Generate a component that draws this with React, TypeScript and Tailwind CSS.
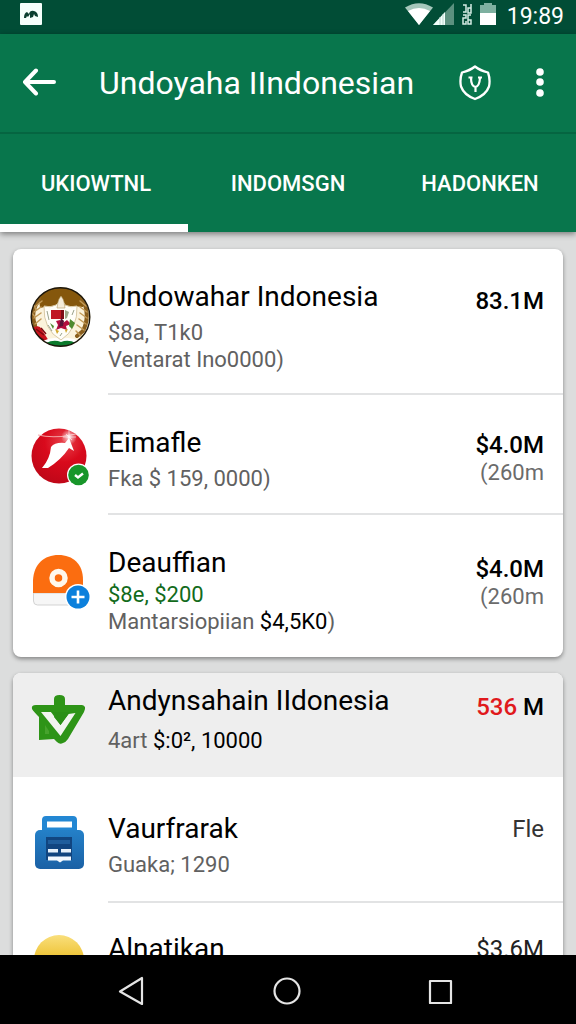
import type { ReactNode } from 'react';
import { clsx } from 'clsx';

interface Entry {
  id: string;
  icon: ReactNode;
  iconClass: string;
  title: string;
  details: ReactNode;
  detailsClass?: string;
  amount: ReactNode;
  amountClass: string;
  note?: string;
  rowClass: string;
}

const tabs = ['UKIOWTNL', 'INDOMSGN', 'HADONKEN'];

/* ===== Entry icons ===== */

function EmblemIcon() {
  return (
    <svg viewBox="0 0 62 62" className="size-[62px]" aria-hidden="true">
      <defs>
        <clipPath id="emblem">
          <circle cx="30.5" cy="31" r="29.5" />
        </clipPath>
      </defs>
      <circle cx="30.5" cy="31" r="30" fill="#fbf3dc" />
      <g clipPath="url(#emblem)">
        <path d="M8 0h45v21l-11-1-6 2H25l-6-2-9 2z" fill="#85570c" />
        <path d="M0 38l10 3 9 14-4 7H0z" fill="#c8141c" />
        <path d="M10 57l10-4h21l10 4-8 7H18z" fill="#0b7a2c" />
        <path d="M13 55q9-5 18-2 9-3 18 2l-3 2q-8-4-15-1-7-3-15 1z" fill="#fff" />
        <g stroke="#8a5f1e" strokeWidth="4" fill="none" strokeLinecap="round">
          <path d="M9 13Q0 26 5 39" />
          <path d="M52 13q9 15 1 32l-6 5" />
        </g>
        <g stroke="#c29a58" strokeWidth="1.5" strokeLinecap="round">
          <path d="M6 20l6-5M4 26l7-5M4 32l7-5M5 38l6-5M4 19l2 5M2 27l3 4" />
          <path d="M56 20l-6-5M57 26l-7-5M57 32l-7-5M56 38l-7-5M54 44l-7-5M51 50l-5-5" />
        </g>
        <path d="M6 43l8 6M5 48l9 6M11 42l5 6" stroke="#7d0a10" strokeWidth="1.5" />
      </g>
      <path d="M14 20q6 2 12-1l2-2h6l1 2q6 3 12 1 1 23-16 34Q13 44 14 20z" fill="#fffef8" stroke="#d9c9a5" strokeWidth="1" />
      <path d="M27 22l1-6 1-3 2-3 2 3 1 3 1 6z" fill="#f4ecda" stroke="#b29862" strokeWidth="0.6" />
      <path d="M21 24h10v9H21z" fill="#c01822" />
      <path d="M31 24h3v9h-3z" fill="#7e0c16" />
      <path d="M35 24l4 2-2 6-2 1z" fill="#9fa88b" />
      <path d="M26 35l4-1 3 3 4-3 4 4-5 2 1 4-6-2-5 2 2-5z" fill="#b30d3e" />
      <path d="M31 32l3 3-1 5-4 1z" fill="#5a1238" />
      <path d="M20 37l4 3-1 3zM40 33l5 4-3 6-3-3z" fill="#4f8b2f" />
      <path d="M25 43l4 2-2 3zM35 44l3-1-2 4z" fill="#d2a82e" />
      <path d="M17 25l2 9M18 39l4 6M44 24l-2 5M32 47l-2 3" stroke="#99a18a" strokeWidth="1" />
      <circle cx="30.5" cy="31" r="29.3" fill="none" stroke="#1c170d" strokeWidth="1.4" />
    </svg>
  );
}

function RedArrowIcon() {
  return (
    <svg viewBox="0 0 62 62" className="size-[62px]" aria-hidden="true">
      <defs>
        <radialGradient id="redBall" cx="0.6" cy="0.25" r="0.8">
          <stop offset="0" stopColor="#e8434c" />
          <stop offset="0.45" stopColor="#d90a1c" />
          <stop offset="1" stopColor="#bd0718" />
        </radialGradient>
        <radialGradient id="flare">
          <stop offset="0" stopColor="#fff" />
          <stop offset="0.35" stopColor="#fff" stopOpacity="0.55" />
          <stop offset="1" stopColor="#fff" stopOpacity="0" />
        </radialGradient>
      </defs>
      <circle cx="29" cy="29" r="27.5" fill="url(#redBall)" />
      <path d="M8 8q16 4 38-1" fill="none" stroke="#f4a3a5" strokeWidth="1.1" />
      <circle cx="39" cy="10" r="8" fill="url(#flare)" />
      <path d="M39 3v14M33 10h13M36 7l6 6" stroke="#fff" strokeOpacity="0.7" strokeWidth="0.8" />
      <path d="M12 41q8-9 9-21 4-5 14-4l4-5 5 13-5-3Q31 33 18 41z" fill="#fff" />
      <circle cx="48.500" cy="48" r="11.500" fill="#fff" />
      <circle cx="48.500" cy="48" r="10.300" fill="#18962a" />
      <path d="M45 48l3 2.500 5-4" fill="none" stroke="#fff" strokeWidth="2.400" />
    </svg>
  );
}

function OrangeIcon() {
  return (
    <svg viewBox="0 0 62 62" className="size-[62px]" aria-hidden="true">
      <path d="M3.500 43h49v8q0 4-4 4h-41q-4 0-4-4z" fill="#f6f6f6" stroke="#d3d3d3" />
      <path d="M3 43V30C4 14 14 5 28.500 5S53 14 53 30v13z" fill="#fb6d10" />
      <circle cx="28.500" cy="28" r="6.500" fill="none" stroke="#fff8ec" strokeWidth="5.500" />
      <circle cx="48" cy="47" r="13" fill="#fff" />
      <circle cx="48" cy="47" r="11.500" fill="#0c80dc" />
      <path d="M41.500 47h13M48 40.500v13" stroke="#fff" strokeWidth="2.600" />
    </svg>
  );
}

function GreenCheckIcon() {
  return (
    <svg viewBox="0 0 62 62" className="size-[62px]" aria-hidden="true">
      <path
        d="M24 16v-6q0-4 5.500-4t5.500 4v6h17q5 1 2 7L38 50q-2 3-5 4-3 2-6-1l-3-3-15 1V28Q4 23 2 20q-1-4 4-4z"
        fill="#2e9417"
      />
      <path d="M11 23h10l9.500 13 8-11 7-1L30.500 47z" fill="#f2f4ef" />
      <path d="M21 23l4 2-1 3 6.500 8L40 23z" fill="#2b8f16" />
      <path d="M15 36l4 6v3h-4z" fill="#47a32d" />
    </svg>
  );
}

function BlueCaseIcon() {
  return (
    <svg viewBox="0 0 62 62" className="size-[62px]" aria-hidden="true">
      <defs>
        <linearGradient id="case" x1="0" y1="0" x2="0" y2="1">
          <stop offset="0" stopColor="#2480c8" />
          <stop offset="1" stopColor="#1b61a5" />
        </linearGradient>
      </defs>
      <path d="M12 20V8q0-4 4-4h27q4 0 4 4v12h-5V9.500H17V20z" fill="#2387d3" />
      <path d="M17 15.500h25V20H17z" fill="#2387d3" />
      <rect x="5" y="18" width="49" height="39" rx="5" fill="url(#case)" />
      <path d="M16 25h26v23H16z" fill="#114580" />
      <path d="M18 28h22v4H18z" fill="#1f5d9c" />
      <path d="M18 37h10v3.500H18zM31 37h10v3.500H31z" fill="#e6f1fb" />
      <path d="M18 44.500h23v4h-8l-3 2-3-2h-9z" fill="#f3f9ff" />
    </svg>
  );
}

function CoinIcon() {
  return (
    <svg viewBox="0 0 62 62" className="size-[62px]" aria-hidden="true">
      <defs>
        <linearGradient id="coin" x1="0" y1="0" x2="0" y2="1">
          <stop offset="0" stopColor="#f9df7c" />
          <stop offset="0.5" stopColor="#edc02e" />
        </linearGradient>
      </defs>
      <circle cx="29" cy="30" r="25" fill="url(#coin)" />
    </svg>
  );
}

const firstCard: Entry[] = [
  {
    id: 'undowahar',
    icon: <EmblemIcon />,
    iconClass: 'mt-[37px]',
    title: 'Undowahar Indonesia',
    details: (
      <>
        <p>$8a, T1k0</p>
        <p>Ventarat Ino0000)</p>
      </>
    ),
    detailsClass: 'mt-1.5',
    amount: '83.1M',
    amountClass: 'mt-1.5 font-medium',
    rowClass: 'min-h-[146px]',
  },
  {
    id: 'eimafle',
    icon: <RedArrowIcon />,
    iconClass: 'mt-8',
    title: 'Eimafle',
    details: <p>Fka $ 159, 0000)</p>,
    detailsClass: 'mt-1.5',
    amount: '$4.0M',
    amountClass: 'mt-1 font-medium',
    note: '(260m',
    rowClass: 'min-h-[120px]',
  },
  {
    id: 'deauffian',
    icon: <OrangeIcon />,
    iconClass: 'mt-[35px]',
    title: 'Deauffian',
    details: (
      <>
        <p className="text-[#126b1b]">$8e, $200</p>
        <p>
          Mantarsiopiian <span className="text-black">$4,5K0</span>)
        </p>
      </>
    ),
    detailsClass: 'mt-0.5',
    amount: '$4.0M',
    amountClass: 'mt-2 font-medium',
    note: '(260m',
    rowClass: 'min-h-[142px]',
  },
];

const secondCard: Entry[] = [
  {
    id: 'andynsahain',
    icon: <GreenCheckIcon />,
    iconClass: 'mt-4',
    title: 'Andynsahain IIdonesia',
    details: (
      <p>
        4art <span className="text-black">$:0², 10000</span>
      </p>
    ),
    detailsClass: 'mt-2.5',
    amount: (
      <>
        <span className="text-[#e0191c]">536</span> M
      </>
    ),
    amountClass: 'mt-2 font-medium',
    rowClass: 'min-h-[104px] bg-[#eeeeee]',
  },
  {
    id: 'vaurfrarak',
    icon: <BlueCaseIcon />,
    iconClass: 'mt-[35px]',
    title: 'Vaurfrarak',
    details: <p>Guaka; 1290</p>,
    detailsClass: 'mt-1.5',
    amount: 'Fle',
    amountClass: 'mt-0.5 text-[#333333]',
    rowClass: 'min-h-[126px]',
  },
  {
    id: 'alnatikan',
    icon: <CoinIcon />,
    iconClass: 'mt-[27px]',
    title: 'Alnatikan',
    details: null,
    amount: '$3.6M',
    amountClass: 'mt-0.5 text-[#222222]',
    rowClass: 'min-h-[120px]',
  },
];

function EntryRow({ entry, padding, divider }: { entry: Entry; padding: string; divider: boolean }) {
  return (
    <li className={clsx('flex pl-[17px]', entry.rowClass)}>
      <div className={clsx('w-[78px] shrink-0', entry.iconClass)}>{entry.icon}</div>
      <div
        className={clsx(
          'flex min-w-0 flex-1 items-start justify-between pr-[19px]',
          padding,
          divider && 'border-b-2 border-[#e2e3e4]'
        )}
      >
        <div className="whitespace-nowrap">
          <h2 className="text-[28px] leading-8 text-black">{entry.title}</h2>
          <div className={clsx('text-[22px] leading-[27px] text-[#616161]', entry.detailsClass)}>
            {entry.details}
          </div>
        </div>
        <div className={clsx('shrink-0 text-right text-2xl leading-7', entry.amountClass)}>
          <p>{entry.amount}</p>
          {entry.note && <p className="text-[22px] leading-[27px] font-normal text-[#6b6b6b]">{entry.note}</p>}
        </div>
      </div>
    </li>
  );
}

const cardClass = 'overflow-hidden rounded-lg bg-white shadow-[0_2px_4px_rgba(0,0,0,0.4)]';

export default function App() {
  return (
    <div className="flex h-screen flex-col overflow-hidden bg-[#dcdddd] font-[Roboto,sans-serif] text-black">
      {/* ===== Status bar ===== */}
      <div className="flex h-[34px] shrink-0 items-center bg-[#014d36] pr-3 pl-5 text-white">
        <svg viewBox="0 0 22 22" className="mb-1.5 size-[22px]" aria-hidden="true">
          <rect width="22" height="22" rx="1" fill="#f5fffb" />
          <path d="M4 15q0-5 3-6l2 2q1-4 5-3 4 1 4 6l-3-1-1-2-1 3-3 1v-4l-2 3-1-1-1 2z" fill="#0a3f2f" />
        </svg>
        <div className="ml-auto flex items-center">
          <svg viewBox="0 0 92 22" className="mb-1.5 h-[22px] w-[92px]" aria-hidden="true">
            <path d="M0 4.500Q14-4 28 4.500L14 22z" fill="#a5c7bb" />
            <path d="M3 8q11-6 22 0L14 22z" fill="#fff" />
            <path d="M49 0v22H28z" fill="#5c917f" />
            <path d="M40 9v13H28z" fill="#f2fffb" />
            <path d="M35 14v8M38 11v11" stroke="#b8d6cc" />
            <g fill="none" stroke="#d5ece4" strokeWidth="1.500">
              <path d="M58 2h3v7h-3M66 1v4h-3v5h3V5M58 12h3v3h-3v6h3v-3M66 12h-3v9h3v-4h-3" />
            </g>
            <path d="M75 2h4V0h8v2h4v9H75z" fill="#7eb0a0" />
            <path d="M75 10h16v12H75z" fill="#fff" />
          </svg>
          <span className="ml-[10px] text-[23px] leading-7">19:89</span>
        </div>
      </div>

      {/* ===== App bar ===== */}
      <header className="z-10 shrink-0 bg-[#08764c] text-white shadow-[0_2px_6px_rgba(0,0,0,0.45)]">
        <div className="flex h-[100px] items-center border-b-2 border-[#056541] pr-[30px] pl-[22px]">
          <button type="button" aria-label="Back">
            <svg viewBox="0 0 34 30" className="h-[30px] w-[34px]" fill="none" stroke="currentColor" strokeWidth="4" strokeLinecap="round" strokeLinejoin="round">
              <path d="M14 2.500L3 14l11 11.500M4 14h28" />
            </svg>
          </button>
          <h1 className="ml-[43px] text-[32px] leading-10 whitespace-nowrap">Undoyaha IIndonesian</h1>
          <button type="button" aria-label="Security" className="ml-auto">
            <svg viewBox="0 0 32 36" className="h-9 w-8" fill="none" stroke="currentColor">
              <path d="M16 1.500Q21 5.500 29 7.500q2.500 7 1 14Q27 30 16 34 5 30 2 21.500q-1.500-7 1-14 8-2 13-6z" strokeWidth="2.300" strokeLinejoin="round" />
              <path d="M9.500 12.500h4M19 12.500h4M12 13q0 8 4.500 9 4-1 4.500-9M16.500 21v6" strokeWidth="2.200" />
            </svg>
          </button>
          <button type="button" aria-label="More options" className="ml-[43px]">
            <svg viewBox="0 0 12 32" className="h-8 w-3" fill="currentColor">
              <circle cx="6" cy="5" r="3.800" />
              <circle cx="6" cy="15" r="3.800" />
              <circle cx="6" cy="26" r="3.800" />
            </svg>
          </button>
        </div>
        <nav role="tablist" className="grid h-[98px] grid-cols-3">
          {tabs.map((tab, i) => (
            <button key={tab} type="button" role="tab" aria-selected={i === 0} className="relative text-[22px] font-medium">
              {tab}
              {i === 0 && <span className="absolute right-1 bottom-0 left-0 h-2 bg-white" />}
            </button>
          ))}
        </nav>
      </header>

      {/* ===== Lists ===== */}
      <main className="min-h-0 flex-1 overflow-hidden px-[13px] pt-[17px]">
        <ul className={cardClass}>
          {firstCard.map((entry, i) => (
            <EntryRow key={entry.id} entry={entry} padding="pt-8" divider={i < firstCard.length - 1} />
          ))}
        </ul>
        <ul className={clsx(cardClass, 'mt-4')}>
          {secondCard.map((entry, i) => (
            <EntryRow key={entry.id} entry={entry} padding={i === 0 ? 'pt-3' : i === 1 ? 'pt-9' : 'pt-[30px]'} divider={i === 1} />
          ))}
        </ul>
      </main>

      {/* ===== Navigation bar ===== */}
      <footer className="z-10 grid h-[69px] shrink-0 grid-cols-3 bg-black pr-[57px] pl-[53px] text-[#e4e4e4]">
        <button type="button" aria-label="Back" className="flex items-center justify-center">
          <svg viewBox="0 0 28 30" className="h-[30px] w-7" fill="none" stroke="currentColor" strokeWidth="2.200" strokeLinejoin="round">
            <path d="M25 3v26L3 16.500z" />
          </svg>
        </button>
        <button type="button" aria-label="Home" className="flex items-center justify-center">
          <svg viewBox="0 0 30 30" className="size-[30px]" fill="none" stroke="currentColor" strokeWidth="2.200">
            <circle cx="16" cy="16" r="12.500" />
          </svg>
        </button>
        <button type="button" aria-label="Recent apps" className="flex items-center justify-center">
          <svg viewBox="0 0 28 28" className="size-7" fill="none" stroke="currentColor" strokeWidth="2.200" strokeLinejoin="round">
            <path d="M3 5h21v22H3z" />
          </svg>
        </button>
      </footer>
    </div>
  );
}
